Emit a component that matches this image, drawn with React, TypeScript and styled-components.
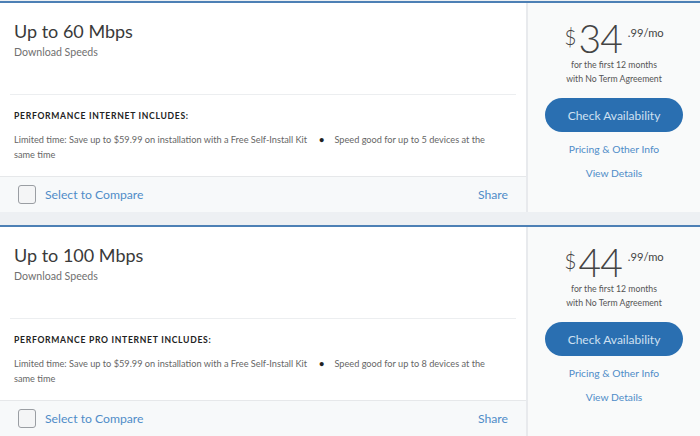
import React from "react";
import styled, { createGlobalStyle } from "styled-components";

const Global = createGlobalStyle`
  html, body { margin: 0; padding: 0; background: #edf0f3; }
  body { font-family: Lato, "Open Sans", "Liberation Sans", sans-serif; }
  * { box-sizing: border-box; }
`;

const Page = styled.div`
  display: flex;
  flex-direction: column;
  gap: 13px;
  padding-top: 1px;
  background: #edf0f3;
  width: 700px;
  height: 436px;
  overflow: hidden;
`;

const Card = styled.section`
  display: grid;
  grid-template-columns: 528px 1fr;
  background: #fff;
  border-top: 2px solid #4d80b5;
  flex-shrink: 0;
`;

const Main = styled.div`
  display: flex;
  flex-direction: column;
  border-right: 2px solid #e8eaed;
`;

const Head = styled.div`
  padding: 16px 4px 0;
  height: 92px;
  border-bottom: 1px solid #eceef0;
  margin: 0 10px;
`;

const Title = styled.h2`
  margin: 0;
  font-size: 18px;
  line-height: 24px;
  font-weight: 400;
  color: #3a3a3a;
`;

const Sub = styled.div`
  margin-top: 2px;
  font-size: 10.6px;
  line-height: 14px;
  color: #707070;
`;

const Includes = styled.div`
  padding: 15px 14px 0;
  height: 82px;
  border-bottom: 1px solid #e6e8ea;
`;

const IncHead = styled.h3`
  margin: 0;
  font-size: 8.6px;
  line-height: 12px;
  font-weight: 700;
  letter-spacing: 0.7px;
  color: #222;
  text-transform: uppercase;
`;

const Features = styled.p`
  margin: 10px 0 0;
  font-size: 9.2px;
  line-height: 15px;
  color: #666;
  width: 472px;
`;

const Dot = styled.span`
  margin: 0 10px 0 12px;
  color: #222;
  font-weight: 700;
`;

const Footer = styled.div`
  display: flex;
  align-items: center;
  height: 35px;
  padding: 0 18px 0 18px;
  background: #f7f9fa;
`;

const Check = styled.span`
  width: 18px;
  height: 19px;
  border: 1px solid #9a9ea3;
  border-radius: 3px;
  background: #f4f5f6;
  margin-right: 9px;
`;

const Link = styled.a<{ size?: number }>`
  color: #4f8cc8;
  font-size: ${(p) => p.size ?? 12.2}px;
  text-decoration: none;
  cursor: pointer;
`;

const Spacer = styled.div`
  flex: 1;
`;

const Side = styled.div`
  display: flex;
  flex-direction: column;
  align-items: center;
  background: #f9fafa;
  padding-top: 15px;
`;

const Price = styled.div`
  display: flex;
  align-items: flex-start;
  color: #444;
  height: 40px;
`;

const Dollar = styled.span`
  font-size: 21px;
  font-weight: 300;
  line-height: 20px;
  margin-top: 9px;
  margin-right: 2px;
`;

const Big = styled.span`
  font-size: 39px;
  font-weight: 300;
  line-height: 40px;
  letter-spacing: -1px;
`;

const Cents = styled.span`
  font-size: 11.2px;
  line-height: 12px;
  font-weight: 400;
  margin-left: 6px;
  margin-top: 9px;
`;

const Terms = styled.div`
  margin-top: 0;
  text-align: center;
  font-size: 8.7px;
  line-height: 13.5px;
  color: #555;
`;

const Button = styled.button`
  margin-top: 13px;
  width: 138px;
  height: 34px;
  border: none;
  border-radius: 17px;
  background: #2a6fb1;
  color: #cfe0f1;
  font-family: inherit;
  font-size: 12px;
  cursor: pointer;
`;

const SideLinks = styled.div`
  display: flex;
  flex-direction: column;
  align-items: center;
  gap: 10px;
  margin-top: 10px;
  line-height: 14px;
`;

type Plan = {
  speed: string;
  name: string;
  price: string;
  devices: number;
};

const plans: Plan[] = [
  { speed: "Up to 60 Mbps", name: "Performance Internet", price: "34", devices: 5 },
  { speed: "Up to 100 Mbps", name: "Performance Pro Internet", price: "44", devices: 8 },
];

function PlanCard({ plan }: { plan: Plan }) {
  return (
    <Card>
      <Main>
        <Head>
          <Title>{plan.speed}</Title>
          <Sub>Download Speeds</Sub>
        </Head>
        <Includes>
          <IncHead>{plan.name} includes:</IncHead>
          <Features>
            Limited time: Save up to $59.99 on installation with a Free Self-Install Kit
            <Dot>•</Dot>
            Speed good for up to {plan.devices} devices at the same time
          </Features>
        </Includes>
        <Footer>
          <Check />
          <Link>Select to Compare</Link>
          <Spacer />
          <Link>Share</Link>
        </Footer>
      </Main>
      <Side>
        <Price>
          <Dollar>$</Dollar>
          <Big>{plan.price}</Big>
          <Cents>.99/mo</Cents>
        </Price>
        <Terms>
          for the first 12 months
          <br />
          with No Term Agreement
        </Terms>
        <Button>Check Availability</Button>
        <SideLinks>
          <Link size={10.3}>Pricing &amp; Other Info</Link>
          <Link size={10.3}>View Details</Link>
        </SideLinks>
      </Side>
    </Card>
  );
}

export default function App() {
  return (
    <>
      <Global />
      <Page>
        {plans.map((p) => (
          <PlanCard key={p.speed} plan={p} />
        ))}
      </Page>
    </>
  );
}
